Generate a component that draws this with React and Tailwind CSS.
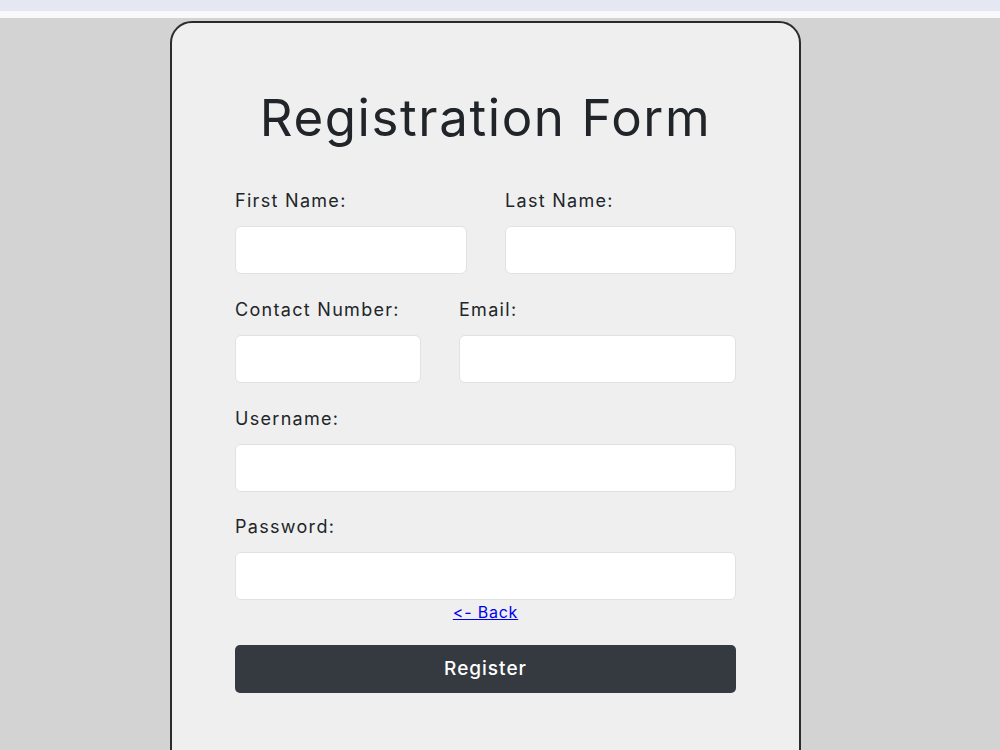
import React from 'react';

const font = { fontFamily: 'Inter, "Open Sans", sans-serif', fontFeatureSettings: '"calt" 0' };

const Field = ({ label, className = '' }) => (
  <div className={`flex flex-col ${className}`}>
    <label className="text-[18px] leading-[27px] tracking-[1.3px] text-[#212529] mb-[12px]">{label}</label>
    <input
      type="text"
      className="h-[48px] w-full rounded-[6px] border border-[#dee2e6] bg-white px-3 outline-none"
    />
  </div>
);

export default function App() {
  return (
    <div className="min-h-[750px] bg-[#d3d3d3]" style={font}>
      <div className="h-[11px] bg-[#e5e7f3]" />
      <div className="h-[7px] bg-[#f8f8fd]" />
      <div className="flex justify-center pt-[3px] pr-[29px]">
        <div className="w-[631px] h-[760px] rounded-[22px] border-2 border-[#2b2b2b] bg-[#efefef] px-[63px] pt-[62px]">
          <h1 className="text-center text-[51px] leading-[66px] font-normal text-[#212529] tracking-[1.6px]">
            Registration Form
          </h1>
          <form className="mt-[36px]" onSubmit={(e) => e.preventDefault()}>
            <div className="flex gap-[38px]">
              <Field label="First Name:" className="w-[232px]" />
              <Field label="Last Name:" className="flex-1" />
            </div>
            <div className="flex gap-[38px] mt-[22px]">
              <Field label="Contact Number:" className="w-[186px]" />
              <Field label="Email:" className="flex-1" />
            </div>
            <Field label="Username:" className="mt-[22px]" />
            <Field label="Password:" className="mt-[21px]" />
            <div className="text-center leading-[24px]">
              <a href="#" className="text-[16px] tracking-[0.8px] text-[#0000ee] underline">
                &lt;- Back
              </a>
            </div>
            <button
              type="submit"
              className="mt-[21px] h-[48px] w-full rounded-[5px] bg-[#343a40] text-[19px] tracking-[1px] font-medium text-white"
            >
              Register
            </button>
          </form>
        </div>
      </div>
    </div>
  );
}
